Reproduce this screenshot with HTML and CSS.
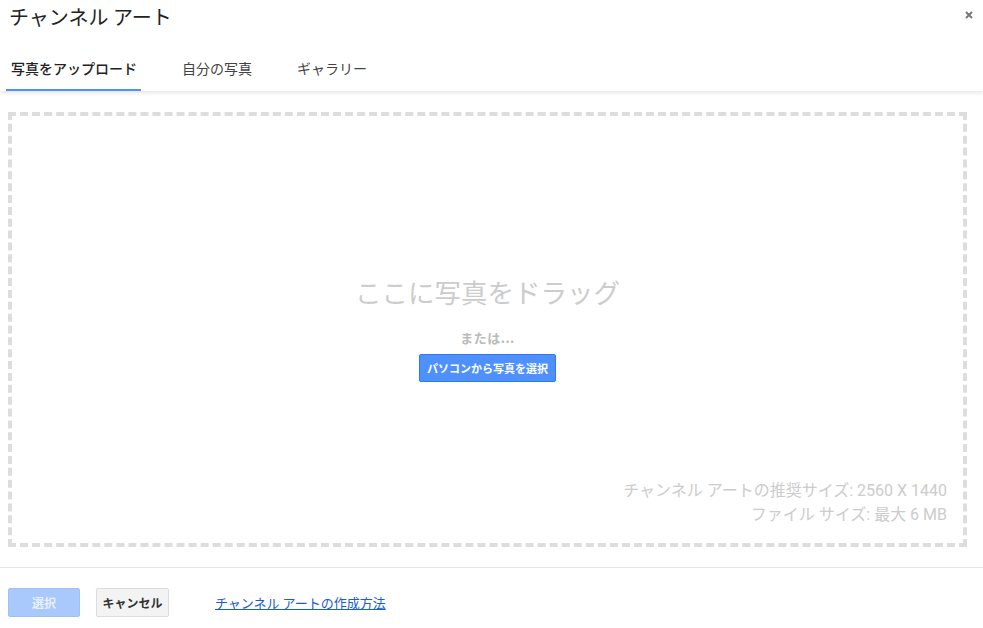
FILE: index.html
```html
<!DOCTYPE html>
<html lang="ja">
<head>
  <meta charset="UTF-8">
  <title>チャンネル アート</title>
  <link rel="stylesheet" href="styles.css">
</head>
<body>
  <div class="dialog">
    <header class="dialog-header">
      <div class="title-row">
        <h1>チャンネル アート</h1>
        <button class="close-btn" aria-label="閉じる">
          <svg width="8" height="8" viewBox="0 0 8 8"><path d="M1 1L7 7M7 1L1 7" stroke="#777" stroke-width="2"/></svg>
        </button>
      </div>
      <nav class="tabs">
        <a href="#" class="tab active">写真をアップロード</a>
        <a href="#" class="tab">自分の写真</a>
        <a href="#" class="tab">ギャラリー</a>
      </nav>
    </header>

    <main class="dialog-body">
      <div class="drop-zone">
        <div class="drop-center">
          <p class="drop-title">ここに写真をドラッグ</p>
          <p class="drop-or">または...</p>
          <button class="btn-blue">パソコンから写真を選択</button>
        </div>
        <div class="drop-info">
          <p>チャンネル アートの推奨サイズ: 2560 X 1440</p>
          <p>ファイル サイズ: 最大 6 MB</p>
        </div>
      </div>
    </main>

    <footer class="dialog-footer">
      <button class="btn-select" disabled>選択</button>
      <button class="btn-cancel">キャンセル</button>
      <a href="#" class="help-link">チャンネル アートの作成方法</a>
    </footer>
  </div>
</body>
</html>
```

FILE: styles.css
```css
* {
  margin: 0;
  padding: 0;
  box-sizing: border-box;
}

body {
  font-family: "Noto Sans CJK JP", Roboto, sans-serif;
  background: #fff;
  color: #333;
}

.dialog {
  width: 983px;
  height: 628px;
  display: flex;
  flex-direction: column;
}

.dialog-header {
  box-shadow: 0 2px 4px rgba(0,0,0,0.1);
}

.title-row {
  display: flex;
  justify-content: space-between;
  align-items: flex-start;
  padding: 3px 10px 0 9px;
  height: 47px;
}

.title-row h1 {
  font-size: 20px;
  font-weight: normal;
  color: #222;
  line-height: 28px;
}

.close-btn {
  border: none;
  background: none;
  width: 8px;
  height: 8px;
  margin-top: 8px;
  cursor: pointer;
  display: flex;
}

.tabs {
  display: flex;
  padding-left: 6px;
  height: 44px;
}

.tab {
  font-size: 14px;
  color: #444;
  text-decoration: none;
  padding: 0 4px 0 5px;
  line-height: 42px;
  margin-right: 36px;
  border-bottom: 2px solid transparent;
}

.tab.active {
  color: #222;
  font-weight: 500;
  border-bottom-color: #4d90fe;
}

.dialog-body {
  padding: 21px 16px 20px 8px;
}

.drop-zone {
  height: 435px;
  border: 4px dashed #ddd;
  display: flex;
  flex-direction: column;
  justify-content: flex-end;
  position: relative;
}

.drop-center {
  position: absolute;
  top: 157px;
  left: 0;
  right: 0;
  text-align: center;
}

.drop-title {
  font-size: 26.5px;
  color: #ccc;
  line-height: 38px;
}

.drop-or {
  font-size: 13px;
  font-weight: bold;
  color: #bbb;
  margin-top: 18px;
  line-height: 18px;
  letter-spacing: 0.5px;
}

.btn-blue {
  margin-top: 7px;
  height: 28px;
  padding: 0 7px;
  font-family: inherit;
  font-size: 11px;
  font-weight: bold;
  color: #fff;
  background: #4d90fe;
  border: 1px solid #3079ed;
  border-radius: 2px;
}

.drop-info {
  text-align: right;
  font-family: Roboto, "Noto Sans CJK JP", sans-serif;
  font-size: 16px;
  color: #ccc;
  padding: 0 16px 16px 0;
  line-height: 24px;
}

.dialog-footer {
  border-top: 1px solid #e5e5e5;
  display: flex;
  padding: 20px 8px 0;
  gap: 16px;
  height: 61px;
  align-items: flex-start;
}

.btn-select,
.btn-cancel {
  height: 29px;
  font-family: inherit;
  font-size: 12px;
  font-weight: bold;
  border-radius: 2px;
}

.btn-select {
  width: 72px;
  background: #a9c8fc;
  border: 1px solid #a0c0f5;
  color: #e8f0fe;
}

.btn-cancel {
  width: 73px;
  background: #f3f3f3;
  border: 1px solid #dcdcdc;
  color: #333;
}

.help-link {
  font-size: 13px;
  color: #1a5bd6;
  margin-left: 30px;
  line-height: 29px;
}
```
